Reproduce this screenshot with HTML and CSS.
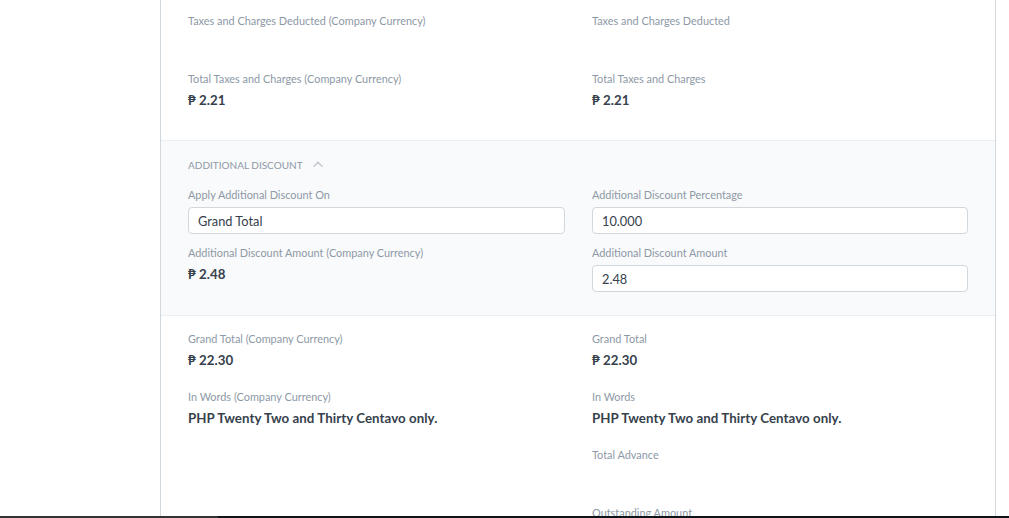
FILE: index.html
```html
<!DOCTYPE html>
<html>
<head>
<meta charset="utf-8">
<link rel="stylesheet" href="styles.css">
</head>
<body>
<div class="page">
  <div class="gutter"></div>
  <div class="card">
    <section class="section sec-taxes">
      <div class="cols">
        <div class="col">
          <div class="field"><div class="label">Taxes and Charges Deducted (Company Currency)</div><div class="box"></div></div>
          <div class="field"><div class="label">Total Taxes and Charges (Company Currency)</div><div class="box"><div class="value">₱ 2.21</div></div></div>
        </div>
        <div class="col">
          <div class="field"><div class="label">Taxes and Charges Deducted</div><div class="box"></div></div>
          <div class="field"><div class="label">Total Taxes and Charges</div><div class="box"><div class="value">₱ 2.21</div></div></div>
        </div>
      </div>
    </section>
    <section class="section sec-discount">
      <div class="sec-head">
        <span class="sec-title">Additional Discount</span>
        <svg class="chev" width="10" height="6" viewBox="0 0 10 6"><path d="M1 5.2 L5 1.2 L9 5.2" fill="none" stroke="#c3cad1" stroke-width="1.6" stroke-linecap="round" stroke-linejoin="round"/></svg>
      </div>
      <div class="cols">
        <div class="col">
          <div class="field"><div class="label">Apply Additional Discount On</div><div class="box"><div class="input">Grand Total</div></div></div>
          <div class="field"><div class="label">Additional Discount Amount (Company Currency)</div><div class="box"><div class="value">₱ 2.48</div></div></div>
        </div>
        <div class="col">
          <div class="field"><div class="label">Additional Discount Percentage</div><div class="box"><div class="input">10.000</div></div></div>
          <div class="field"><div class="label">Additional Discount Amount</div><div class="box"><div class="input">2.48</div></div></div>
        </div>
      </div>
    </section>
    <section class="section sec-totals">
      <div class="cols">
        <div class="col">
          <div class="field"><div class="label">Grand Total (Company Currency)</div><div class="box"><div class="value">₱ 22.30</div></div></div>
          <div class="field"><div class="label">In Words (Company Currency)</div><div class="box"><div class="value">PHP Twenty Two and Thirty Centavo only.</div></div></div>
        </div>
        <div class="col">
          <div class="field"><div class="label">Grand Total</div><div class="box"><div class="value">₱ 22.30</div></div></div>
          <div class="field"><div class="label">In Words</div><div class="box"><div class="value">PHP Twenty Two and Thirty Centavo only.</div></div></div>
          <div class="field"><div class="label">Total Advance</div><div class="box"></div></div>
          <div class="field"><div class="label">Outstanding Amount</div><div class="box"></div></div>
        </div>
      </div>
    </section>
  </div>
</div>
<div class="taskbar"><div class="tb-left"></div><div class="tb-right"></div></div>
</body>
</html>
```

FILE: styles.css
```css
html, body {
  margin: 0;
  padding: 0;
  height: 518px;
  overflow: hidden;
  background: #ffffff;
  font-family: "Lato", "Liberation Sans", sans-serif;
  color: #36414c;
}

.page {
  display: flex;
  align-items: stretch;
  min-height: 518px;
}

.gutter {
  width: 160px;
  flex: none;
}

.card {
  width: 834px;
  flex: none;
  border-left: 1px solid #d1d8dd;
  border-right: 1px solid #d1d8dd;
  background: #fff;
}

.section {
  padding: 13px 27px 11px 27px;
}

.sec-discount {
  background: #f9fafb;
  border-top: 1px solid #ebeff2;
  border-bottom: 1px solid #ebeff2;
  padding-top: 15px;
  padding-bottom: 12px;
}

.sec-totals {
  padding-top: 15px;
}

.sec-head {
  display: flex;
  align-items: center;
  gap: 10px;
  height: 18px;
  margin-bottom: 13px;
}

.sec-title {
  font-size: 10px;
  text-transform: uppercase;
  letter-spacing: 0;
  color: #8d99a6;
}

.chev {
  display: block;
  margin-top: -2px;
}

.cols {
  display: grid;
  grid-template-columns: 377px 376px;
  column-gap: 27px;
}

.field {
  margin-bottom: 10px;
}

.label {
  font-size: 10.9px;
  line-height: 16px;
  height: 16px;
  margin-bottom: 4px;
  color: #8d99a6;
  white-space: nowrap;
}

.box {
  height: 28px;
}

.value {
  font-size: 13.3px;
  line-height: 18px;
  font-weight: 700;
  letter-spacing: 0.05px;
  color: #36414c;
  white-space: nowrap;
}

.input {
  box-sizing: border-box;
  height: 27px;
  border: 1px solid #d1d8dd;
  border-radius: 4px;
  background: #fff;
  padding: 0 9px;
  font-size: 12.8px;
  line-height: 26px;
  color: #36414c;
}

.taskbar {
  position: fixed;
  left: 0;
  right: 0;
  bottom: 0;
  height: 2px;
  display: flex;
}

.tb-left {
  width: 218px;
  background: #333333;
}

.tb-right {
  flex: 1;
  background: #0e1417;
}
```
